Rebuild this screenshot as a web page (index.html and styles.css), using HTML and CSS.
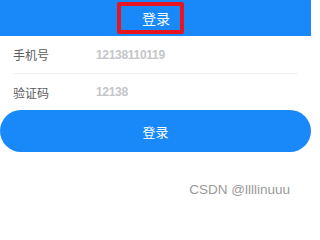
FILE: index.html
```html
<!DOCTYPE html>
<html lang="zh">
<head>
<meta charset="utf-8">
<link rel="stylesheet" href="styles.css">
</head>
<body>
<div class="page">
  <header class="nav">
    <span class="nav-title">登录</span>
    <span class="mark"></span>
  </header>
  <div class="form">
    <div class="cell">
      <span class="label">手机号</span>
      <span class="value">12138110119</span>
    </div>
    <div class="cell">
      <span class="label">验证码</span>
      <span class="value">12138</span>
    </div>
  </div>
  <div class="btn">登录</div>
  <div class="wm">CSDN @llllinuuu</div>
</div>
</body>
</html>
```
FILE: styles.css
```css
html, body {
  margin: 0;
  padding: 0;
  background: #fff;
}
.page {
  width: 311px;
  font-family: "Liberation Sans", "Noto Sans CJK SC", sans-serif;
}
.nav {
  position: relative;
  height: 36px;
  background: #1989fa;
  display: flex;
  align-items: center;
  justify-content: center;
}
.nav-title {
  color: #fff;
  font-size: 14px;
  padding-left: 1px;
}
.mark {
  position: absolute;
  left: 117px;
  top: 2px;
  width: 67px;
  height: 32px;
  box-sizing: border-box;
  border: 4px solid #e8141f;
  border-radius: 2px;
}
.form {
  display: flex;
  flex-direction: column;
}
.cell {
  height: 37px;
  margin: 0 13px;
  display: flex;
  align-items: center;
  box-sizing: border-box;
}
.cell + .cell {
  border-top: 1px solid #f2f3f5;
}
.label {
  width: 83px;
  font-size: 12px;
  color: #5a5b5c;
}
.value {
  font-size: 12px;
  font-weight: 600;
  color: #c4c5c8;
  letter-spacing: -0.3px;
}
.btn {
  height: 42px;
  border-radius: 21px;
  background: #1989fa;
  color: #fff;
  font-size: 13px;
  display: flex;
  align-items: center;
  justify-content: center;
}
.wm {
  margin-top: 30px;
  padding-right: 21px;
  text-align: right;
  font-size: 13.5px;
  color: #9a9a9a;
}
```
